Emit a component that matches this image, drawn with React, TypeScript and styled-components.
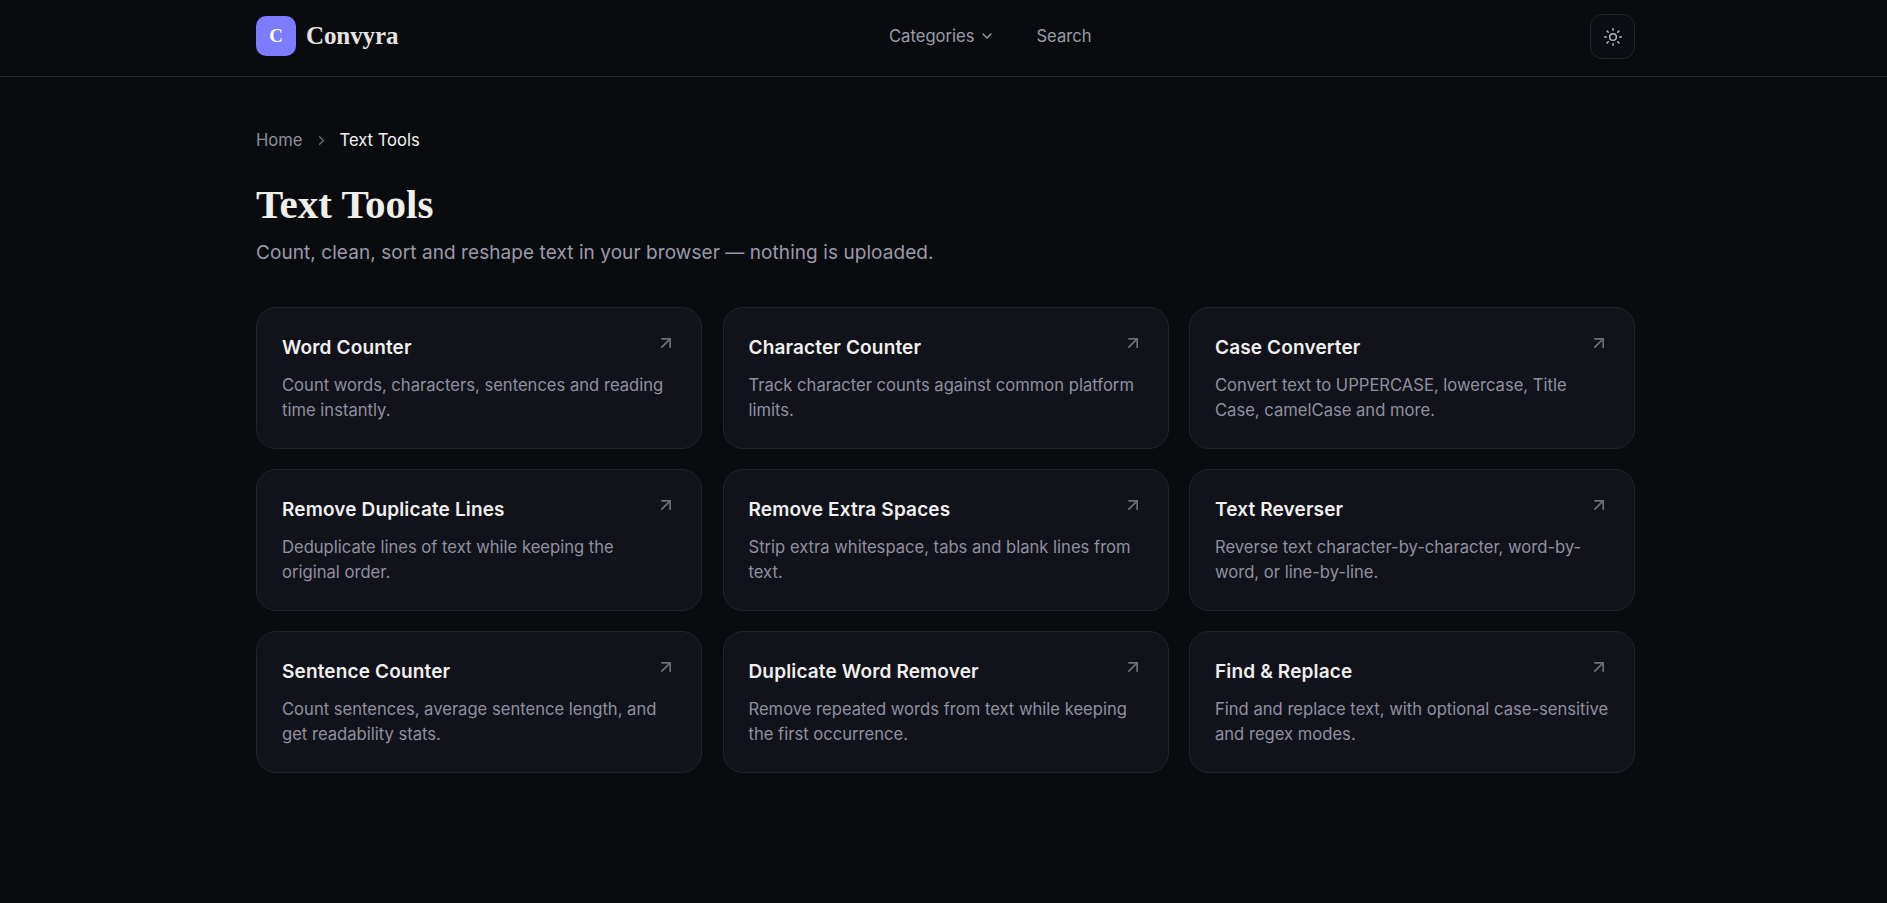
import React from "react";
import styled, { createGlobalStyle } from "styled-components";
import { ChevronDown, ChevronRight, Sun, ArrowUpRight } from "lucide-react";

const Global = createGlobalStyle`
  html, body { margin: 0; padding: 0; background: #0a0b0f; }
  body { font-family: Inter, "Liberation Sans", sans-serif; min-height: 903px; }
  * { box-sizing: border-box; }
`;

const Header = styled.header`
  height: 77px;
  border-bottom: 1px solid #24252c;
`;
const HeaderInner = styled.div`
  width: 1379px;
  margin-left: 256px;
  height: 76px;
  padding-bottom: 4px;
  display: flex;
  align-items: center;
  justify-content: space-between;
`;
const Brand = styled.a`
  display: flex;
  align-items: center;
  gap: 10px;
  width: 633px;
`;
const LogoMark = styled.span`
  width: 40px;
  height: 40px;
  border-radius: 10px;
  background: #7c7cff;
  color: #fff;
  display: flex;
  align-items: center;
  justify-content: center;
  font: 700 19px "Liberation Serif", serif;
`;
const BrandName = styled.span`
  font: 700 25px "Liberation Serif", serif;
  color: #e6e5e0;
  letter-spacing: -0.1px;
`;
const Nav = styled.nav`
  display: flex;
  align-items: center;
  gap: 41px;
  margin-right: auto;
`;
const NavItem = styled.a`
  display: flex;
  align-items: center;
  gap: 5px;
  font-size: 16.6px;
  color: #9c9ca8;
`;
const ThemeButton = styled.button`
  width: 45px;
  height: 45px;
  margin-top: 1px;
  border-radius: 12px;
  border: 1px solid #23242a;
  background: #0c0d12;
  color: #b4b4bc;
  display: flex;
  align-items: center;
  justify-content: center;
  padding: 0;
`;
const Main = styled.main`
  width: 1379px;
  margin-left: 256px;
  padding-top: 51px;
`;
const Crumbs = styled.div`
  display: flex;
  align-items: center;
  gap: 11px;
  font-size: 16.6px;
  line-height: 24px;
  color: #8f8f9c;
`;
const Current = styled.span`
  color: #f2f2f0;
`;
const Chevron = styled(ChevronRight)`
  color: #6e6e7a;
`;
const Title = styled.h1`
  margin: 28px 0 0;
  font: 700 41px/48px "Liberation Serif", serif;
  color: #f0eee8;
`;
const Lead = styled.p`
  margin: 11px 0 0;
  font-size: 19px;
  line-height: 28px;
  letter-spacing: 0.07px;
  color: #9a9aa8;
`;
const Grid = styled.div`
  margin-top: 40px;
  display: grid;
  grid-template-columns: repeat(3, 1fr);
  gap: 20.5px;
`;
const Card = styled.a`
  position: relative;
  height: 141.5px;
  padding: 27px 25px 0;
  border: 1px solid #23242b;
  border-radius: 20px;
  background: #11121a;
`;
const CardIcon = styled(ArrowUpRight)`
  position: absolute;
  top: 25px;
  right: 25px;
  color: #6f6f7a;
`;
const CardTitle = styled.h3`
  margin: 0;
  font-size: 19px;
  font-weight: 600;
  line-height: 26px;
  letter-spacing: 0.15px;
  color: #f0f0ee;
`;
const CardText = styled.p`
  margin: 12px 0 0;
  font-size: 16.6px;
  line-height: 25px;
  color: #9090a0;
`;

const tools = [
  ["Word Counter", "Count words, characters, sentences and reading time instantly."],
  ["Character Counter", "Track character counts against common platform limits."],
  ["Case Converter", "Convert text to UPPERCASE, lowercase, Title Case, camelCase and more."],
  ["Remove Duplicate Lines", "Deduplicate lines of text while keeping the original order."],
  ["Remove Extra Spaces", "Strip extra whitespace, tabs and blank lines from text."],
  ["Text Reverser", "Reverse text character-by-character, word-by-word, or line-by-line."],
  ["Sentence Counter", "Count sentences, average sentence length, and get readability stats."],
  ["Duplicate Word Remover", "Remove repeated words from text while keeping the first occurrence."],
  ["Find & Replace", "Find and replace text, with optional case-sensitive and regex modes."],
];

export default function App() {
  return (
    <>
      <Global />
      <Header>
        <HeaderInner>
          <Brand>
            <LogoMark>C</LogoMark>
            <BrandName>Convyra</BrandName>
          </Brand>
          <Nav>
            <NavItem>
              Categories <ChevronDown size={16} />
            </NavItem>
            <NavItem>Search</NavItem>
          </Nav>
          <ThemeButton>
            <Sun size={20} strokeWidth={1.8} />
          </ThemeButton>
        </HeaderInner>
      </Header>
      <Main>
        <Crumbs>
          <span>Home</span>
          <Chevron size={15} />
          <Current>Text Tools</Current>
        </Crumbs>
        <Title>Text Tools</Title>
        <Lead>Count, clean, sort and reshape text in your browser — nothing is uploaded.</Lead>
        <Grid>
          {tools.map(([name, text]) => (
            <Card key={name}>
              <CardTitle>{name}</CardTitle>
              <CardText>{text}</CardText>
              <CardIcon size={20} />
            </Card>
          ))}
        </Grid>
      </Main>
    </>
  );
}
